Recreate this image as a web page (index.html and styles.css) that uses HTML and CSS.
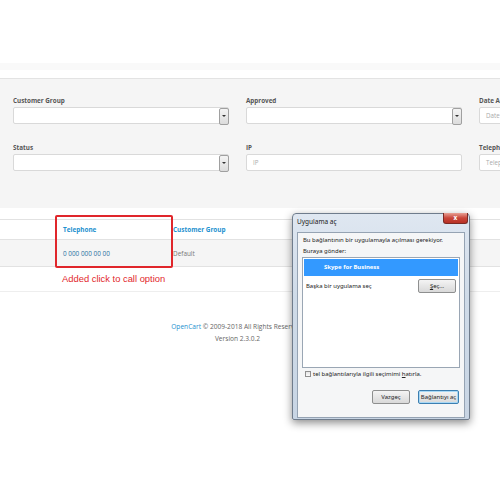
FILE: index.html
```html
<!DOCTYPE html>
<html>
<head>
<meta charset="utf-8">
<link rel="stylesheet" href="styles.css">
</head>
<body>
<div class="page">
  <div class="topbar"></div>
  <div class="subbar"></div>
  <div class="filter">
    <div class="grid">
      <div class="field">
        <label>Customer Group</label>
        <div class="select"><span class="arrow"></span></div>
      </div>
      <div class="field">
        <label>Approved</label>
        <div class="select"><span class="arrow"></span></div>
      </div>
      <div class="field">
        <label>Date Added</label>
        <div class="input">Date Added</div>
      </div>
      <div class="field">
        <label>Status</label>
        <div class="select"><span class="arrow"></span></div>
      </div>
      <div class="field">
        <label>IP</label>
        <div class="input">IP</div>
      </div>
      <div class="field">
        <label>Telephone</label>
        <div class="input">Telephone</div>
      </div>
    </div>
  </div>
  <div class="table">
    <div class="row head">
      <div class="cell c1"></div>
      <div class="cell c2">Telephone</div>
      <div class="cell c3">Customer Group</div>
    </div>
    <div class="row body">
      <div class="cell c1"></div>
      <div class="cell c2 tel">0 000 000 00 00</div>
      <div class="cell c3 grp">Default</div>
    </div>
    <div class="note">Added click to call option</div>
    <div class="highlight"></div>
  </div>
  <div class="footer">
    <div><span class="brand">OpenCart</span> © 2009-2018 All Rights Reserved.</div>
    <div>Version 2.3.0.2</div>
  </div>

  <div class="dialog">
    <div class="titlebar">Uygulama aç</div>
    <div class="close">x</div>
    <div class="content">
      <div class="msg">Bu bağlantının bir uygulamayla açılması gerekiyor.</div>
      <div class="msg">Buraya gönder:</div>
      <div class="list">
        <div class="item sel">Skype for Business</div>
        <div class="item other">
          <span>Başka bir uygulama seç</span>
          <span class="btn small"><u>Ş</u>eç...</span>
        </div>
      </div>
      <div class="check"><span class="box"></span><span>tel bağlantılarıyla ilgili seçimimi <u>h</u>atırla.</span></div>
      <div class="actions">
        <span class="btn">Vazgeç</span>
        <span class="btn default">Bağlantıyı aç</span>
      </div>
    </div>
  </div>
</div>
</body>
</html>
```
FILE: styles.css
```css
html, body {
  margin: 0;
  padding: 0;
  background: #ffffff;
}
.page {
  position: relative;
  width: 500px;
  height: 500px;
  overflow: hidden;
  font-family: "Open Sans", "DejaVu Sans", sans-serif;
  color: #666;
}
.topbar {
  height: 63px;
  background: #ffffff;
}
.subbar {
  height: 7px;
  background: #f9f9f9;
  margin-bottom: 8px;
}
.filter {
  background: #f5f5f5;
  border-top: 1px solid #e3e3e3;
  padding: 0 0 0 13px;
  box-sizing: border-box;
  height: 130px;
}
.grid {
  display: grid;
  grid-template-columns: 216px 216px 216px;
  column-gap: 17px;
  row-gap: 19px;
  padding-top: 17px;
}
.field label {
  display: block;
  font-size: 6.3px;
  font-weight: bold;
  color: #555;
  height: 11px;
  line-height: 9px;
}
.select, .input {
  position: relative;
  height: 17px;
  background: #fff;
  border: 1px solid #d9d9d9;
  border-radius: 2px;
  box-sizing: border-box;
}
.input {
  font-size: 6.2px;
  color: #aaa;
  line-height: 15px;
  padding-left: 6px;
}
.arrow {
  position: absolute;
  right: -1px;
  top: 0px;
  width: 8px;
  height: 15px;
  border: 1px solid #a0a0a0;
  border-radius: 2px;
  background: linear-gradient(#f4f4f4, #dcdcdc);
}
.arrow::after {
  content: "";
  position: absolute;
  left: 2px;
  top: 6px;
  border-left: 2px solid transparent;
  border-right: 2px solid transparent;
  border-top: 2px solid #333;
}
.table {
  position: relative;
  padding-top: 11px;
  height: 84px;
  box-sizing: border-box;
  border-bottom: 1px solid #eeeeee;
}
.row {
  display: flex;
  border-top: 1px solid #e2e2e2;
  font-size: 6.4px;
}
.row.head {
  height: 19px;
  align-items: center;
  font-weight: bold;
  color: #1e91cf;
  background: #fff;
}
.row.body {
  height: 26px;
  align-items: center;
  background: #f5f5f5;
  border-bottom: 1px solid #e2e2e2;
}
.cell.c1 { width: 63px; }
.cell.c2 { width: 110px; }
.cell.c3 { flex: 1; }
.tel { color: #1e6fa0; }
.grp { color: #777; }
.note {
  font-family: "Liberation Sans", Arial, sans-serif;
  font-size: 9.4px;
  color: #e2282d;
  padding: 6px 0 0 62px;
}
.highlight {
  position: absolute;
  left: 55px;
  top: 7px;
  width: 114px;
  height: 49px;
  border: 2px solid #e0262b;
  border-radius: 2px;
}
.footer {
  width: 475px;
  text-align: center;
  font-size: 6.6px;
  color: #666;
  padding-top: 29px;
  line-height: 12px;
}
.brand { color: #1e91cf; }

/* dialog */
.dialog {
  position: absolute;
  left: 292px;
  top: 213px;
  width: 178px;
  height: 207px;
  box-sizing: border-box;
  border: 1px solid #6f7c8c;
  border-radius: 4px 4px 2px 2px;
  background: linear-gradient(#dfe7f1, #cfdbe8 40%, #c8d5e4);
  box-shadow: 0 3px 8px rgba(0,0,0,0.45);
  font-family: "Noto Sans", "Open Sans", sans-serif;
  color: #222;
}
.titlebar {
  font-size: 6.5px;
  padding: 3px 0 0 4px;
  height: 12px;
  color: #1a1a1a;
}
.close {
  position: absolute;
  right: 1px;
  top: -1px;
  width: 25px;
  height: 11px;
  border: 1px solid #7a2a24;
  border-top: none;
  border-radius: 0 0 3px 3px;
  box-sizing: border-box;
  background: linear-gradient(#e8a195, #c9463a 50%, #b83125);
  color: #fff;
  font-size: 6.5px;
  font-weight: bold;
  text-align: center;
  line-height: 9px;
}
.content {
  margin: 3px 4px 0 4px;
  height: 186px;
  background: #f5f6f7;
  border: 1px solid #95a3b3;
  box-sizing: border-box;
  padding: 2px 4px 0 4px;
  display: flex;
  flex-direction: column;
}
.msg {
  font-size: 5.95px;
  line-height: 11px;
  padding-left: 1px;
}
.list {
  margin-top: 0px;
  height: 111px;
  background: #fff;
  border: 1px solid #9aa6b4;
  box-sizing: border-box;
  padding: 1px;
}
.item {
  font-size: 5.95px;
}
.item.sel {
  height: 17px;
  background: #3399ff;
  color: #fff;
  font-weight: bold;
  line-height: 17px;
  padding-left: 20px;
}
.item.other {
  display: flex;
  justify-content: space-between;
  align-items: center;
  padding: 3px 2px 0 2px;
  height: 14px;
}
.btn {
  display: inline-flex;
  align-items: center;
  justify-content: center;
  font-size: 5.95px;
  border: 1px solid #8e8f8f;
  border-radius: 2px;
  background: linear-gradient(#f4f4f4, #e6e6e6 50%, #d9d9d9);
  box-sizing: border-box;
  height: 14px;
  color: #222;
}
.btn.small { width: 38px; }
.check {
  display: flex;
  align-items: center;
  gap: 2px;
  font-size: 5.95px;
  margin-top: 2px;
  padding-left: 3px;
}
.box {
  width: 6px;
  height: 6px;
  border: 1px solid #8f8f8f;
  background: linear-gradient(#e6e6e6, #fafafa);
  box-sizing: border-box;
}
.actions {
  display: flex;
  justify-content: flex-end;
  gap: 8px;
  margin-top: 12px;
  padding-right: 1px;
}
.actions .btn { width: 38px; }
.actions .btn.default {
  width: 41px;
  border-color: #3c7fb1;
  box-shadow: inset 0 0 0 1px #a8d8f5;
}
```
